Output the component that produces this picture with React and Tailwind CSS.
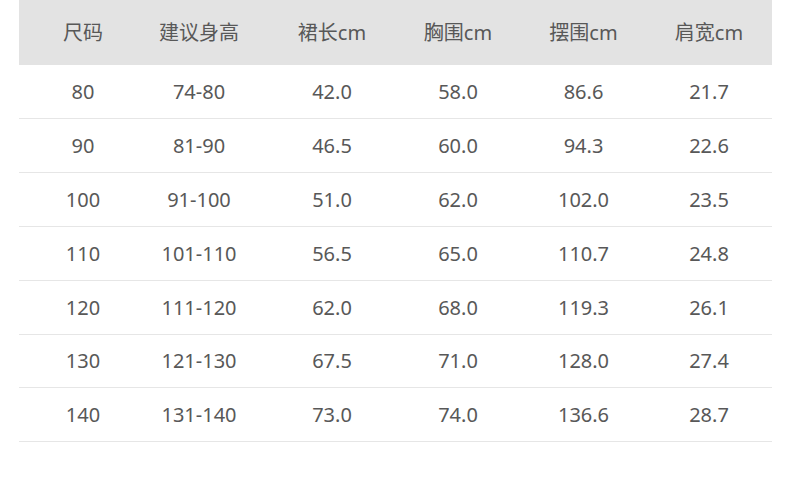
import React from "react";

const headers = ["尺码", "建议身高", "裙长cm", "胸围cm", "摆围cm", "肩宽cm"];

const rows = [
  ["80", "74-80", "42.0", "58.0", "86.6", "21.7"],
  ["90", "81-90", "46.5", "60.0", "94.3", "22.6"],
  ["100", "91-100", "51.0", "62.0", "102.0", "23.5"],
  ["110", "101-110", "56.5", "65.0", "110.7", "24.8"],
  ["120", "111-120", "62.0", "68.0", "119.3", "26.1"],
  ["130", "121-130", "67.5", "71.0", "128.0", "27.4"],
  ["140", "131-140", "73.0", "74.0", "136.6", "28.7"],
];

// per-column nudges so each column's text centre lands where the picture has it
const cellPad = ["pl-[6px]", "pr-[8px]", "pl-[4px]", "", "", ""];

const grid = "grid grid-cols-[122px_124px_130px_126px_125px_126px]";

export default function App() {
  return (
    <div
      className="w-[790px] h-[485px] bg-white pl-[19px] text-[#585858]"
      style={{ fontFamily: "'Noto Sans', 'Noto Sans CJK SC', sans-serif" }}
    >
      <div className="w-[753px]">
        <div className={`${grid} h-[65px] bg-[#e3e3e3] items-center text-[20px]`}>
          {headers.map((h, i) => (
            <div key={h} className={`text-center ${cellPad[i]}`}>
              {h}
            </div>
          ))}
        </div>
        {rows.map((r, idx) => (
          <div
            key={r[0]}
            className={`${grid} ${idx === 5 ? "h-[53px]" : "h-[54px]"} border-b border-[#e6e6e6] items-center text-[20px]`}
          >
            {r.map((v, i) => (
              <div key={i} className={`text-center ${cellPad[i]}`}>
                {v}
              </div>
            ))}
          </div>
        ))}
      </div>
    </div>
  );
}
